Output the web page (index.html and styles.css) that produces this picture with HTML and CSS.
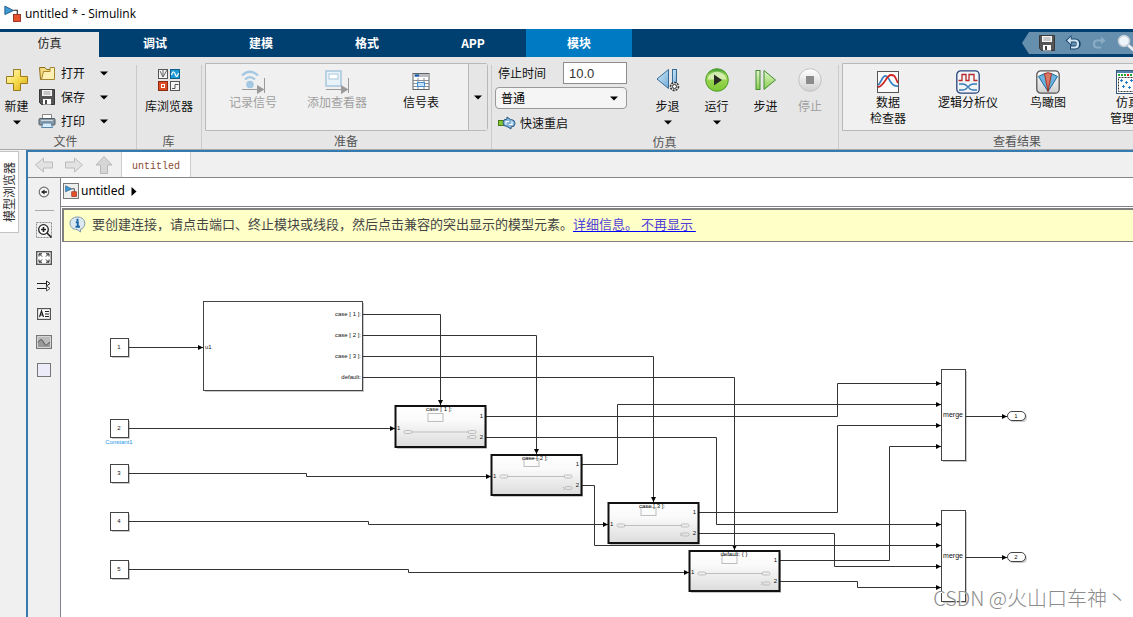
FILE: index.html
```html
<!DOCTYPE html>
<html lang="zh-CN">
<head>
<meta charset="utf-8">
<title>untitled * - Simulink</title>
<link rel="stylesheet" href="styles.css">
</head>
<body>
<svg class="defs" width="0" height="0" aria-hidden="true">
  <defs>
    <linearGradient id="gold" x1="0" y1="0" x2="1" y2="1"><stop offset="0" stop-color="#fffbd0"/><stop offset=".5" stop-color="#f7dc50"/><stop offset="1" stop-color="#d9a915"/></linearGradient>
    <linearGradient id="blue" x1="0" y1="0" x2="1" y2="1"><stop offset="0" stop-color="#d4ecfa"/><stop offset="1" stop-color="#6fa9d6"/></linearGradient>
    <linearGradient id="green" x1="0" y1="0" x2="0" y2="1"><stop offset="0" stop-color="#e2f7cc"/><stop offset="1" stop-color="#86cc4c"/></linearGradient>
    <linearGradient id="play" x1="0" y1="0" x2="0" y2="1"><stop offset="0" stop-color="#3f9a35"/><stop offset=".3" stop-color="#a4da5c"/><stop offset="1" stop-color="#7cc832"/></linearGradient>
    <linearGradient id="pale" x1="0" y1="0" x2="0" y2="1"><stop offset="0" stop-color="#fff"/><stop offset="1" stop-color="#d0d0d0"/></linearGradient>
    <linearGradient id="subfill" x1="0" y1="0" x2="0" y2="1"><stop offset="0" stop-color="#fff"/><stop offset=".35" stop-color="#fafafa"/><stop offset="1" stop-color="#dcdcdc"/></linearGradient>
    <marker id="arrow" viewBox="0 0 5 5" refX="5" refY="2.5" markerWidth="5" markerHeight="5" markerUnits="userSpaceOnUse" orient="auto"><path d="M0 0L5 2.5L0 5Z" fill="#000"/></marker>
    <symbol id="caret" viewBox="0 0 8 5"><path d="M0 0.5H8L4 4.5Z" fill="#000"/></symbol>
    <symbol id="model" viewBox="0 0 16 16"><path d="M9 5H12.500V9" fill="none" stroke="#222"/><path d="M.8 1L9 5.200L.8 9Z" fill="#3d9bd6" stroke="#1a4f7c" stroke-width=".8"/><rect x="9" y="9" width="6.500" height="6.500" fill="#e5522b" stroke="#8d2412" stroke-width=".8"/></symbol>
    <symbol id="floppy" viewBox="0 0 16 16"><path d="M.5.5H15.500V15.500H2.500L.5 13.500Z" fill="#555" stroke="#383838"/><rect x="3" y="1" width="10" height="6" fill="#f4f4f4"/><path d="M4.500 3H11.500M4.500 5H11.500" stroke="#999"/><rect x="4" y="10" width="8" height="5.500" fill="#fff"/><rect x="6" y="11" width="2" height="4" fill="#444"/></symbol>
  </defs>
</svg>

<header class="titlebar">
  <svg width="17" height="17" aria-hidden="true"><use href="#model"/></svg>
  <span>untitled * - Simulink</span>
</header>

<nav class="tabs" aria-label="工具条">
  <button class="tab tab-active">仿真</button>
  <button class="tab">调试</button>
  <button class="tab">建模</button>
  <button class="tab">格式</button>
  <button class="tab">APP</button>
  <button class="tab tab-context">模块</button>
  <div class="quick">
    <button aria-label="保存"><svg width="16" height="16"><use href="#floppy"/></svg></button>
    <button aria-label="撤销"><svg width="16" height="16" viewBox="0 0 16 16"><path d="M3 5.500H10C15 5.500 15 12.500 10 12.500H5" fill="none" stroke="#17426b" stroke-width="4"/><path d="M6.500 0L.5 5.500L6.500 11Z" fill="#17426b"/><path d="M4 5.500H10C14 5.500 14 12.500 10 12.500H6" fill="none" stroke="#cfe3f2" stroke-width="2.200"/><path d="M5.800 1.800L2 5.500L5.800 9.200Z" fill="#cfe3f2"/></svg></button>
    <button aria-label="重做"><svg width="16" height="16" viewBox="0 0 16 16"><path d="M12 5.500H6C2 5.500 2 12.500 6 12.500H10" fill="none" stroke="#8aabc4" stroke-width="2.200"/><path d="M10 1.500L14.500 5.500L10 9.500Z" fill="#8aabc4"/></svg></button>
    <button aria-label="搜索"><svg width="18" height="18" viewBox="0 0 18 18"><path d="M11 11L17 16.500" stroke="#e8eef3" stroke-width="3"/><circle cx="7" cy="7" r="5.500" fill="#eef5fa" stroke="#c3cdd6" stroke-width="1.500"/></svg></button>
  </div>
</nav>

<div class="ribbon">
  <section class="group group-file">
    <div class="group-body">
      <button class="tool tool-new"><svg width="24" height="24" viewBox="0 0 24 24"><path d="M8.500 1.500H15.500V8.500H22.500V15.500H15.500V22.500H8.500V15.500H1.500V8.500H8.500Z" fill="url(#gold)" stroke="#9b7a1c"/></svg><span>新建</span><svg class="caret" width="8" height="5"><use href="#caret"/></svg></button>
      <div class="rows">
        <button class="row"><svg width="18" height="18" viewBox="0 0 18 18"><path d="M1.500 3.500H7L8.500 5.500H14.500V15.500H2.500Z" fill="#f6dc80" stroke="#8c6d1a"/><path d="M12 3.500H16.500V15.500H3.500L5.500 7.500H12Z" fill="#fff0b4" stroke="#a68430"/></svg><span>打开</span><svg class="caret" width="8" height="5"><use href="#caret"/></svg></button>
        <button class="row"><svg width="16" height="16"><use href="#floppy"/></svg><span>保存</span><svg class="caret" width="8" height="5"><use href="#caret"/></svg></button>
        <button class="row"><svg width="18" height="18" viewBox="0 0 18 18"><path d="M4.500 7V2.500H13.500V7" fill="#fff" stroke="#888"/><rect x="1" y="6.500" width="16" height="6.500" rx="1" fill="#8797a5" stroke="#505c66"/><path d="M3 8.500H15" stroke="#c9d7e2"/><path d="M3.500 15.500L5 11H13L14.500 15.500Z" fill="#d5eafa" stroke="#5d87a8"/></svg><span>打印</span><svg class="caret" width="8" height="5"><use href="#caret"/></svg></button>
      </div>
    </div>
    <h2>文件</h2>
  </section>

  <section class="group group-lib">
    <div class="group-body">
      <button class="tool"><svg width="24" height="24" viewBox="0 0 24 24"><g stroke="#555"><rect x="1.500" y="1.500" width="9" height="9" fill="#f4f4f4"/><rect x="13.500" y="1.500" width="9" height="9" fill="#1b9ad6" stroke="#125f8c"/><rect x="1.500" y="13.500" width="9" height="9" fill="#dd4b22" stroke="#8d2b12"/><rect x="13.500" y="13.500" width="9" height="9" fill="#f4f4f4"/></g><path d="M3 3L6 9V2M6 9L10 2" fill="none" stroke="#666"/><path d="M14.500 7C16 2 17.500 4 18.500 7S20.500 8 21.500 5" fill="none" stroke="#fff" stroke-width="1.200"/><rect x="4.500" y="16.500" width="3" height="3" fill="none" stroke="#fff"/><path d="M15 20.500H18V16.500H21.500" fill="none" stroke="#555"/></svg><span>库浏览器</span></button>
    </div>
    <h2>库</h2>
  </section>

  <section class="group group-prep">
    <div class="group-body">
      <div class="gallery">
        <button class="tool" disabled><svg width="24" height="24" viewBox="0 0 24 24"><path d="M1 5.500Q9 -2 17 5.500M4 9.500Q9 4.500 14 9.500" fill="none" stroke="#a3c8e3" stroke-width="2.200"/><circle cx="9" cy="14.500" r="3.800" fill="#a3c8e3"/><path d="M1 19.500H18M23.500 8V23" stroke="#9a9a9a"/><path d="M16 15L23.500 19.500L16 24Z" fill="#9a9a9a"/></svg><span>记录信号</span></button>
        <button class="tool" disabled><svg width="24" height="24" viewBox="0 0 24 24"><rect x="1" y="1" width="15" height="15" fill="#e8f2f9" stroke="#a7c6dc" stroke-width="1.500"/><rect x="4" y="4" width="9" height="5" fill="#fff" stroke="#a7c6dc"/><path d="M1 19.500H18M23.500 8V23" stroke="#9a9a9a"/><path d="M16 15L23.500 19.500L16 24Z" fill="#9a9a9a"/></svg><span>添加查看器</span></button>
        <button class="tool"><svg width="24" height="24" viewBox="0 0 24 24"><rect x="4" y="3.500" width="16" height="16" fill="#fff" stroke="#5e6468"/><rect x="4.500" y="4" width="15" height="3" fill="#b9bdc1"/><rect x="6" y="4.500" width="4" height="2" fill="#0b58b8"/><path d="M4 10.500H20M4 13.500H20M4 16.500H20M9 8V19M15 8V19" stroke="#898f94"/><rect x="8.500" y="12.500" width="7" height="4" fill="#c9e2fb" stroke="#4290d4"/></svg><span>信号表</span></button>
        <button class="more" aria-label="更多"><svg class="caret" width="8" height="5"><use href="#caret"/></svg></button>
      </div>
    </div>
    <h2>准备</h2>
  </section>

  <section class="group group-sim">
    <div class="group-body">
      <div class="settings">
        <div class="stop"><label for="stop-time">停止时间</label><input id="stop-time" type="text" value="10.0"></div>
        <div class="mode"><select aria-label="仿真模式"><option>普通</option></select><svg class="caret" width="8" height="5"><use href="#caret"/></svg></div>
        <button class="restart"><svg width="18" height="14" viewBox="0 0 18 14"><rect x=".5" y="4.500" width="5" height="5" fill="#83c62f" stroke="#47761b"/><path d="M5 6.500Q5 3 9 3V1L12.500 3.500H13.500Q17 4 17 7.500Q17 11 13 11V13L9 10.500Q5 10.500 5 6.500Z" fill="#85b4d9" stroke="#285b86"/><path d="M8 8.500V5.500H11M14 5.500V8.500H11" fill="none" stroke="#fff" stroke-width="1.200"/></svg><span>快速重启</span></button>
      </div>
      <button class="tool run"><svg width="24" height="24" viewBox="0 0 24 24"><path d="M12.500 1.500V20.500L1 11Z" fill="url(#blue)" stroke="#376a94"/><rect x="16.500" y="1.500" width="4" height="17" fill="url(#blue)" stroke="#376a94"/><circle cx="18.500" cy="18.500" r="4" fill="#ddd" stroke="#333" stroke-width="1.600" stroke-dasharray="2 1"/><circle cx="18.500" cy="18.500" r="2" fill="#fff" stroke="#333"/></svg><span>步退</span><svg class="caret" width="8" height="5"><use href="#caret"/></svg></button>
      <button class="tool run"><svg width="24" height="24" viewBox="0 0 24 24"><circle cx="12" cy="12" r="11.300" fill="url(#play)" stroke="#4e9d2a"/><path d="M2.500 11.500C5 1 19 1 21.500 11.500Z" fill="#e2f4c4" opacity=".8"/><path d="M9 6.500L17 12L9 17.500Z" fill="#282b25"/></svg><span>运行</span><svg class="caret" width="8" height="5"><use href="#caret"/></svg></button>
      <button class="tool run"><svg width="24" height="24" viewBox="0 0 24 24"><rect x="2" y="2.500" width="4" height="19" fill="url(#green)" stroke="#458b35"/><path d="M10 2.500V21.500L21.500 12Z" fill="url(#green)" stroke="#458b35"/></svg><span>步进</span></button>
      <button class="tool run run-stop" disabled><svg width="24" height="24" viewBox="0 0 24 24"><circle cx="12" cy="12" r="11.300" fill="url(#pale)" stroke="#c2c2c2"/><rect x="8" y="8" width="8" height="8" fill="#8b8b8b"/></svg><span>停止</span></button>
    </div>
    <h2>仿真</h2>
  </section>

  <section class="group group-results">
    <div class="group-body">
      <div class="gallery">
        <button class="tool"><svg width="24" height="24" viewBox="0 0 24 24"><rect x="1.500" y="1.500" width="21" height="21" fill="#fafafa" stroke="#555"/><path d="M2 15C5 14 6 5 10 6S14 17 22 16" fill="none" stroke="#347fc0" stroke-width="1.700"/><path d="M2 17C9 16 10 5 15 5S19 8 22 13" fill="none" stroke="#cf2522" stroke-width="1.800"/></svg><span>数据<br>检查器</span></button>
        <button class="tool"><svg width="24" height="24" viewBox="0 0 24 24"><rect x=".8" y=".8" width="22.400" height="22.400" rx="4" fill="#f2f5f8" stroke="#24437d" stroke-width="1.300"/><path d="M2.500 10.500H6V4.500H10V10.500H13V4.500H18V10.500H21.500" fill="none" stroke="#b62829" stroke-width="1.300"/><path d="M3 14H7C12 14 12 20 17 20H21M3 20H7C12 20 12 14 17 14H21" fill="none" stroke="#347bb8" stroke-width="1.300"/></svg><span>逻辑分析仪</span></button>
        <button class="tool"><svg width="24" height="24" viewBox="0 0 24 24"><rect x=".8" y=".8" width="22.400" height="22.400" rx="4" fill="url(#pale)" stroke="#555" stroke-width="1.300"/><path d="M12 21.500L2.500 6.500Q12 0 21.500 6.500Z" fill="#69b2df" stroke="#236a9b"/><path d="M12 21.500L8.500 3.500Q12 2 15.500 3.500Z" fill="#d97864" stroke="#a33226"/></svg><span>鸟瞰图</span></button>
        <button class="tool"><svg width="24" height="24" viewBox="0 0 24 24"><rect x=".5" y=".5" width="23" height="23" fill="#fff" stroke="#365777"/><rect x="1" y="1" width="22" height="2" fill="#5384ae"/><path d="M2 5H11M14 5H22" stroke="#21aa36" stroke-width="2" stroke-dasharray="2 1"/><path d="M11 5H13" stroke="#d62a20" stroke-width="2"/><rect x="2.500" y="7.500" width="19" height="14" fill="#fff" stroke="#333" stroke-dasharray="2 1"/><path d="M4 10.500H7M5.500 9V12M9 12.500H12M10.500 11V14M6 16.500H9M7.500 15V18M12 17.500H15M13.500 16V19M14 10.500H17M15.500 9V12" stroke="#2679bd"/></svg><span>仿真<br>管理器</span></button>
      </div>
    </div>
    <h2>查看结果</h2>
  </section>
</div>

<div class="workspace">
  <aside class="dock"><button class="dock-tab"><span>模型浏览器</span></button></aside>
  <main class="editor">
    <div class="doc-bar">
      <button class="nav-btn" aria-label="后退"><svg width="20" height="20" viewBox="0 0 20 20"><path d="M1.500 10L9.500 3V7H18.500V13H9.500V17Z" fill="#e2e2e2" stroke="#bcbcbc"/></svg></button>
      <button class="nav-btn" aria-label="前进"><svg width="20" height="20" viewBox="0 0 20 20"><path d="M18.500 10L10.500 3V7H1.500V13H10.500V17Z" fill="#e2e2e2" stroke="#bcbcbc"/></svg></button>
      <button class="nav-btn" aria-label="向上"><svg width="20" height="20" viewBox="0 0 20 20"><path d="M10 1.500L18 10H13.500V18.500H6.500V10H2Z" fill="#d6d6d6" stroke="#b8b8b8"/></svg></button>
      <button class="doc-tab">untitled</button>
    </div>
    <div class="editor-body">
      <div class="palette">
        <button aria-label="隐藏浏览器"><svg width="16" height="16" viewBox="0 0 16 16"><circle cx="8" cy="8" r="4.800" fill="#f6f6f6" stroke="#707070" stroke-width="1.200"/><path d="M11 8H8" stroke="#222" stroke-width="1.600"/><path d="M8.500 5.500L5 8L8.500 10.500Z" fill="#222"/></svg></button>
        <hr>
        <button aria-label="缩放"><svg width="17" height="17" viewBox="0 0 17 17"><rect x=".5" y=".5" width="15" height="15" fill="none" stroke="#888" stroke-dasharray="2 1"/><circle cx="7.500" cy="7.500" r="4.800" fill="#fff" stroke="#222" stroke-width="1.300"/><path d="M5 7.500H10M7.500 5V10M11 11L15.500 15.500" stroke="#222" stroke-width="1.600"/></svg></button>
        <button aria-label="适应视图"><svg width="16" height="14" viewBox="0 0 16 14"><rect x=".7" y=".7" width="14.600" height="12.600" fill="#fff" stroke="#555" stroke-width="1.400"/><path d="M6 5.500L3.500 3M3 5.500V2.800H6M10 5.500L12.500 3M10 2.800H13V5.500M6 8.500L3.500 11M3 8.500V11.200H6M10 8.500L12.500 11M10 11.200H13V8.500" fill="none" stroke="#222"/></svg></button>
        <button aria-label="采样时间"><svg width="16" height="12" viewBox="0 0 16 12"><path d="M1 3.500H11" stroke="#222"/><path d="M10.500 1L14 3.500L10.500 6Z" fill="#fff" stroke="#222"/><path d="M1 8.500H11" stroke="#222"/><path d="M10.500 6L14 8.500L10.500 11Z" fill="#fff" stroke="#555"/></svg></button>
        <button aria-label="注释"><svg width="14" height="12" viewBox="0 0 14 12"><rect x=".6" y=".6" width="12.800" height="10.800" fill="#fff" stroke="#555" stroke-width="1.200"/><path d="M2.500 9L4.500 3L6.500 9M3 7H6M8 3.500H12M8 6H12M8 8.500H12" fill="none" stroke="#222" stroke-width="1.200"/></svg></button>
        <button aria-label="图像"><svg width="16" height="14" viewBox="0 0 16 14"><rect x=".6" y=".6" width="14.800" height="12.800" fill="#eee" stroke="#777" stroke-width="1.200"/><rect x="2" y="2" width="12" height="10" fill="#bcbcbc"/><path d="M2 7.500Q5 2 7.500 7T11 9.500L14 7V12H2Z" fill="#999"/><path d="M2 7.500Q5 2 7.500 7T11 9.500L14 7" fill="none" stroke="#555"/></svg></button>
        <button aria-label="区域"><svg width="14" height="14" viewBox="0 0 14 14"><rect x=".5" y=".5" width="13" height="13" fill="#ebebfa" stroke="#777"/></svg></button>
      </div>
      <div class="content">
        <div class="crumbs">
          <span class="crumb-icon"><svg width="12" height="12" aria-hidden="true"><use href="#model"/></svg></span>
          <a href="#model-root">untitled</a>
          <svg width="6" height="9" viewBox="0 0 6 9" aria-hidden="true"><path d="M.5 0L5.500 4.500L.5 9Z"/></svg>
        </div>
        <div class="notice">
          <svg width="17" height="17" viewBox="0 0 17 17" aria-hidden="true"><path d="M8.500 1C13 1 15.800 3.600 15.800 7.200S13.500 13 11.500 13.300L11.500 16L8 13.500C3.500 13.500 1 10.600 1 7.200S4 1 8.500 1Z" fill="#dbe8f2" stroke="#8199ab"/><path d="M8.500 2.800V5M6.800 6.200H8.800V10.800M6.500 10.800H11" fill="none" stroke="#1865a3" stroke-width="1.900"/></svg>
          <p>要创建连接，请点击端口、终止模块或线段，然后点击兼容的突出显示的模型元素。<a href="#details">详细信息。 </a><a href="#dismiss">不再显示 </a></p>
        </div>
        <div class="canvas">
          <svg class="diagram" width="1072" height="375" viewBox="61 242 1072 375" role="img" aria-label="Switch Case 模型">
            <g class="shadow">
              <rect x="112" y="340" width="18" height="18"/><rect x="112" y="421" width="18" height="18"/><rect x="112" y="466" width="18" height="18"/><rect x="112" y="514" width="18" height="18"/><rect x="112" y="562" width="18" height="18"/>
              <rect x="205" y="303" width="159" height="89"/>
              <rect x="397" y="408" width="90" height="41"/><rect x="493" y="457" width="90" height="40"/><rect x="610" y="505" width="90" height="40"/><rect x="691" y="553" width="90" height="40"/>
              <rect x="943" y="371" width="24" height="91"/><rect x="943" y="512" width="24" height="91"/>
              <rect x="1009" y="413" width="18" height="9" rx="4.500"/><rect x="1009" y="554" width="18" height="9" rx="4.500"/>
            </g>
            <g class="wire">
              <path d="M129 347.500H203"/><path d="M129 428.500H395"/>
              <path d="M129 473.500H306.500V476.500H491"/><path d="M129 521.500H368.500V524.500H608"/><path d="M129 569.500H408.500V572.500H689"/>
              <path d="M363 314.500H440.500V405"/><path d="M363 335.500H536.500V454"/><path d="M363 356.500H653.500V502"/><path d="M363 377.500H734.500V550"/>
              <path d="M486 416.500H837.500V383.500H941"/><path d="M486 437.500H716.500V524.500H941"/>
              <path d="M582 464.500H617.500V404.500H941"/><path d="M582 485.500H594.500V545.500H941"/>
              <path d="M699 512.500H837.500V425.500H941"/><path d="M699 533.500H834.500V566.500H941"/>
              <path d="M780 560.500H889.500V446.500H941"/><path d="M780 581.500H857.500V587.500H941"/>
              <path d="M966 416.500H1007"/><path d="M966 557.500H1007"/>
            </g>
            <g class="block">
              <rect x="110.500" y="338.500" width="18" height="18"/><rect x="110.500" y="419.500" width="18" height="18"/><rect x="110.500" y="464.500" width="18" height="18"/><rect x="110.500" y="512.500" width="18" height="18"/><rect x="110.500" y="560.500" width="18" height="18"/>
              <rect x="203.500" y="301.500" width="159" height="89"/>
              <rect x="941.500" y="369.500" width="24" height="91"/><rect x="941.500" y="510.500" width="24" height="91"/>
              <rect x="1007.500" y="411.500" width="18" height="9" rx="4.500"/><rect x="1007.500" y="552.500" width="18" height="9" rx="4.500"/>
            </g>
            <g class="subsystem">
              <rect x="395.500" y="406" width="90" height="41"/><rect x="491.500" y="455" width="90" height="40"/><rect x="608.500" y="503" width="90" height="40"/><rect x="689.500" y="551" width="90" height="40"/>
            </g>
            <g class="preview">
              <path d="M411 432H469"/><rect x="428" y="413.500" width="15" height="8"/><rect x="404" y="430.500" width="8" height="3" rx="1.500"/><rect x="468" y="430.500" width="8" height="3" rx="1.500"/><path d="M467 436L469 437.500L467 439"/><rect x="469" y="435.500" width="7" height="3" rx="1.500"/>
              <path d="M507 476.500H565"/><rect x="524" y="458.500" width="15" height="8"/><rect x="500" y="475" width="8" height="3" rx="1.500"/><rect x="564" y="475" width="8" height="3" rx="1.500"/><path d="M563 487L565 488.500L563 490"/><rect x="565" y="486.500" width="7" height="3" rx="1.500"/>
              <path d="M624 525.500H682"/><rect x="641" y="507.500" width="15" height="8"/><rect x="617" y="524" width="8" height="3" rx="1.500"/><rect x="681" y="524" width="8" height="3" rx="1.500"/><path d="M680 533L682 534.500L680 536"/><rect x="682" y="533" width="7" height="3" rx="1.500"/>
              <path d="M705 573.500H763"/><rect x="722" y="555.500" width="15" height="8"/><rect x="698" y="572" width="8" height="3" rx="1.500"/><rect x="762" y="572" width="8" height="3" rx="1.500"/><path d="M761 582L763 583.500L761 585"/><rect x="763" y="582" width="7" height="3" rx="1.500"/>
            </g>
            <g class="label mid">
              <text x="119" y="349">1</text><text x="119" y="430">2</text><text x="119" y="475">3</text><text x="119" y="523">4</text><text x="119" y="571">5</text>
              <text x="1016" y="418">1</text><text x="1016" y="559">2</text>
              <text x="439" y="411">case [ 1 ]:</text><text x="535" y="460">case [ 2 ]:</text><text x="652" y="508">case [ 3 ]:</text><text x="734" y="556">default: { }</text>
              <text class="name" x="119" y="444">Constant1</text>
              <text class="merge" x="953" y="417">merge</text><text class="merge" x="953" y="558">merge</text>
            </g>
            <g class="label">
              <text x="205" y="349">u1</text><text x="397" y="430">1</text><text x="493" y="478">1</text><text x="610" y="526">1</text><text x="691" y="574">1</text>
            </g>
            <g class="label end">
              <text x="361" y="316">case [ 1 ]:</text><text x="361" y="337">case [ 2 ]:</text><text x="361" y="358">case [ 3 ]:</text><text x="361" y="379">default:</text>
              <text x="483" y="418">1</text><text x="483" y="439">2</text><text x="579" y="466">1</text><text x="579" y="487">2</text><text x="696" y="514">1</text><text x="696" y="535">2</text><text x="777" y="562">1</text><text x="777" y="583">2</text>
            </g>
          </svg>
          <div class="watermark">CSDN @火山口车神丶</div>
        </div>
      </div>
    </div>
  </main>
</div>
</body>
</html>
```
FILE: styles.css
```css
* { box-sizing: border-box; }
body {
  margin: 0;
  height: 100vh;
  display: flex;
  flex-direction: column;
  overflow: hidden;
  background: #f0f0f0;
  color: #111;
  font: 12px/16px "Noto Sans CJK SC", sans-serif;
}
button {
  margin: 0;
  padding: 0;
  border: 0;
  background: none;
  color: inherit;
  font: inherit;
}
svg { display: block; flex: none; }
.defs { position: absolute; }

.titlebar {
  display: flex;
  align-items: center;
  gap: 4px;
  flex: none;
  height: 29px;
  padding: 0 4px 2px;
  background: #fff;
  color: #000;
  font-family: "Open Sans", sans-serif;
}

.tabs {
  display: flex;
  flex: none;
  height: 28px;
  background: #004071;
  overflow: hidden;
}
.tab {
  flex: none;
  width: 106px;
  color: #fff;
  font-weight: 700;
}
.tab-active {
  width: 99px;
  margin: 3px 3px 0 0;
  padding-bottom: 3px;
  background: #e6e6e6;
  color: #222;
  font-weight: 400;
}
.tab-context { background: #007bc3; }
.quick {
  display: flex;
  align-items: center;
  gap: 10px;
  flex: none;
  width: 111px;
  height: 22px;
  margin: 3px 0 0 auto;
  padding-left: 17px;
  background: #668fae;
  clip-path: polygon(0 50%, 7px 0, 100% 0, 100% 100%, 7px 100%);
}

.ribbon {
  display: flex;
  flex: none;
  height: 93px;
  overflow: hidden;
  background: #e6e6e6;
  border-bottom: 1px solid #a9a9a9;
}
.group {
  display: flex;
  flex-direction: column;
  flex: none;
  position: relative;
}
.group::after {
  content: "";
  position: absolute;
  top: 8px;
  right: 0;
  bottom: 0;
  border-right: 1px solid #cbcbcb;
}
.group-body { display: flex; height: 77px; }
.group h2 {
  margin: 0;
  padding-right: 2px;
  color: #555;
  font-size: 12px;
  line-height: 16px;
  font-weight: 400;
  text-align: center;
}
.tool {
  display: flex;
  flex-direction: column;
  align-items: center;
  gap: 6px;
  padding-top: 11px;
  white-space: nowrap;
}
.tool:disabled { color: #a0a0a0; }
.group-file { width: 137px; }
.group-file h2 { padding-right: 6px; }
.tool-new { width: 33px; }
.rows { display: flex; flex-direction: column; padding: 4px 0 0 5px; }
.row { display: flex; align-items: center; height: 24px; }
.row span { width: 39px; text-align: left; }
.row svg:first-child { width: 18px; margin-right: 5px; }
.group-lib { width: 65px; }
.group-lib .tool { width: 64px; }
.group-prep { width: 290px; }
.gallery {
  display: flex;
  flex: 1;
  height: 68px;
  margin: 6px 4px 0 3px;
  padding-left: 5px;
  background: #f0f0f0;
  border: 1px solid #b9b9b9;
  border-radius: 0 3px 3px 0;
}
.gallery .tool { gap: 0; width: 84px; padding-top: 6px; }
.more {
  display: flex;
  align-items: center;
  justify-content: center;
  width: 19px;
  margin-left: auto;
  border-left: 1px solid #b9b9b9;
  background: #e6e6e6;
}
.group-sim { width: 347px; }
.settings { display: flex; flex-direction: column; gap: 3px; width: 151px; padding: 5px 0 0 3px; }
.stop { display: flex; align-items: center; justify-content: space-between; width: 132px; padding-left: 3px; }
.stop input {
  width: 64px;
  height: 22px;
  padding: 0 5px;
  border: 1px solid #8d8d8d;
  background: #fff;
  color: #333;
  font: 13px "Liberation Sans", sans-serif;
}
.mode { display: grid; align-items: center; width: 132px; }
.mode > * { grid-area: 1 / 1; }
.mode select {
  appearance: none;
  height: 22px;
  padding: 0 5px;
  border: 1px solid #999;
  border-radius: 4px;
  background: #f5f5f5;
  color: #000;
  font: inherit;
}
.mode .caret { justify-self: end; margin-right: 9px; pointer-events: none; }
.restart { display: flex; align-items: center; gap: 4px; height: 22px; padding-left: 3px; }
.run { width: 49px; }
.run-stop { width: 40px; }
.group-results { width: 358px; }
.group-results .tool { width: 80px; }

.workspace { display: flex; flex: 1; min-height: 0; }
.dock { flex: none; width: 26px; padding-top: 1px; }
.dock-tab {
  display: flex;
  align-items: center;
  justify-content: center;
  width: 19px;
  height: 82px;
  border: 1px solid #c4c4c4;
  border-left: 0;
  background: #fff;
  color: #333;
}
.dock-tab span { writing-mode: vertical-rl; text-orientation: sideways; transform: rotate(180deg); }
.editor {
  display: flex;
  flex-direction: column;
  flex: 1;
  min-width: 0;
  border: solid #367bb0;
  border-width: 2px 0 0 2px;
}
.doc-bar {
  display: flex;
  align-items: center;
  gap: 10px;
  flex: none;
  height: 25px;
  padding-left: 6px;
}
.doc-tab {
  width: 70px;
  height: 25px;
  margin-left: -3px;
  padding-top: 3px;
  border: solid #ccc;
  border-width: 0 1px;
  background: #fff;
  color: #8a4b32;
  font: 10px "Liberation Mono", monospace;
}
.editor-body { display: flex; flex: 1; min-height: 0; border-top: 1px solid #858585; }
.palette { display: flex; flex-direction: column; align-items: center; flex: none; width: 32px; }
.palette button { display: flex; align-items: center; justify-content: center; width: 28px; height: 28px; }
.palette hr { width: 19px; height: 1px; margin: 4px 0 5px; border: 0; background: #aaa; }
.content {
  display: flex;
  flex-direction: column;
  flex: 1;
  min-width: 0;
  border-left: 1px solid #80848a;
  background: #fff;
}
.crumbs {
  display: flex;
  align-items: center;
  gap: 2px;
  flex: none;
  height: 29px;
  padding: 0 2px 2px;
  border-bottom: 1px solid #80808a;
}
.crumbs a { color: #000; font: 12px/18px "Noto Sans", sans-serif; text-decoration: none; }
.crumbs > svg { margin-left: 4px; }
.crumb-icon { padding: 1px; border: 1px solid #777; background: #eee; }
.notice {
  display: flex;
  align-items: center;
  gap: 6px;
  flex: none;
  height: 34px;
  margin: 1px 0 0 1px;
  padding: 0 0 3px 5px;
  border: solid #808080;
  border-width: 2px 0 1px 2px;
  background: #ffffc8;
  color: #444;
}
.notice p { margin: 0; padding-bottom: 1px; font-size: 13px; line-height: 16px; white-space: pre; }
.notice a { color: #5240d8; text-decoration: underline 1px #00f; text-underline-offset: 2px; }
.canvas { flex: 1; min-height: 0; position: relative; overflow: hidden; }
.watermark {
  position: absolute;
  right: 6px;
  bottom: 4px;
  color: #8c8c8c;
  font-size: 20px;
  line-height: 30px;
  font-weight: 300;
  text-shadow: 1px 1px 0 #fff;
}

.shadow rect { fill: #c9c9c9; }
.wire path { fill: none; stroke: #333; marker-end: url(#arrow); }
.block rect { fill: #fff; stroke: #444; }
.subsystem rect { fill: url(#subfill); stroke: #111; stroke-width: 2px; }
.preview rect { fill: none; stroke: #bdbdbd; }
.preview path { fill: none; stroke: #bdbdbd; }
.label { fill: #111; font: 6px "Liberation Sans", sans-serif; }
.mid { text-anchor: middle; }
.end { text-anchor: end; }
.label .name { fill: #1e96e8; }
.label .merge { font-size: 7px; }
```
